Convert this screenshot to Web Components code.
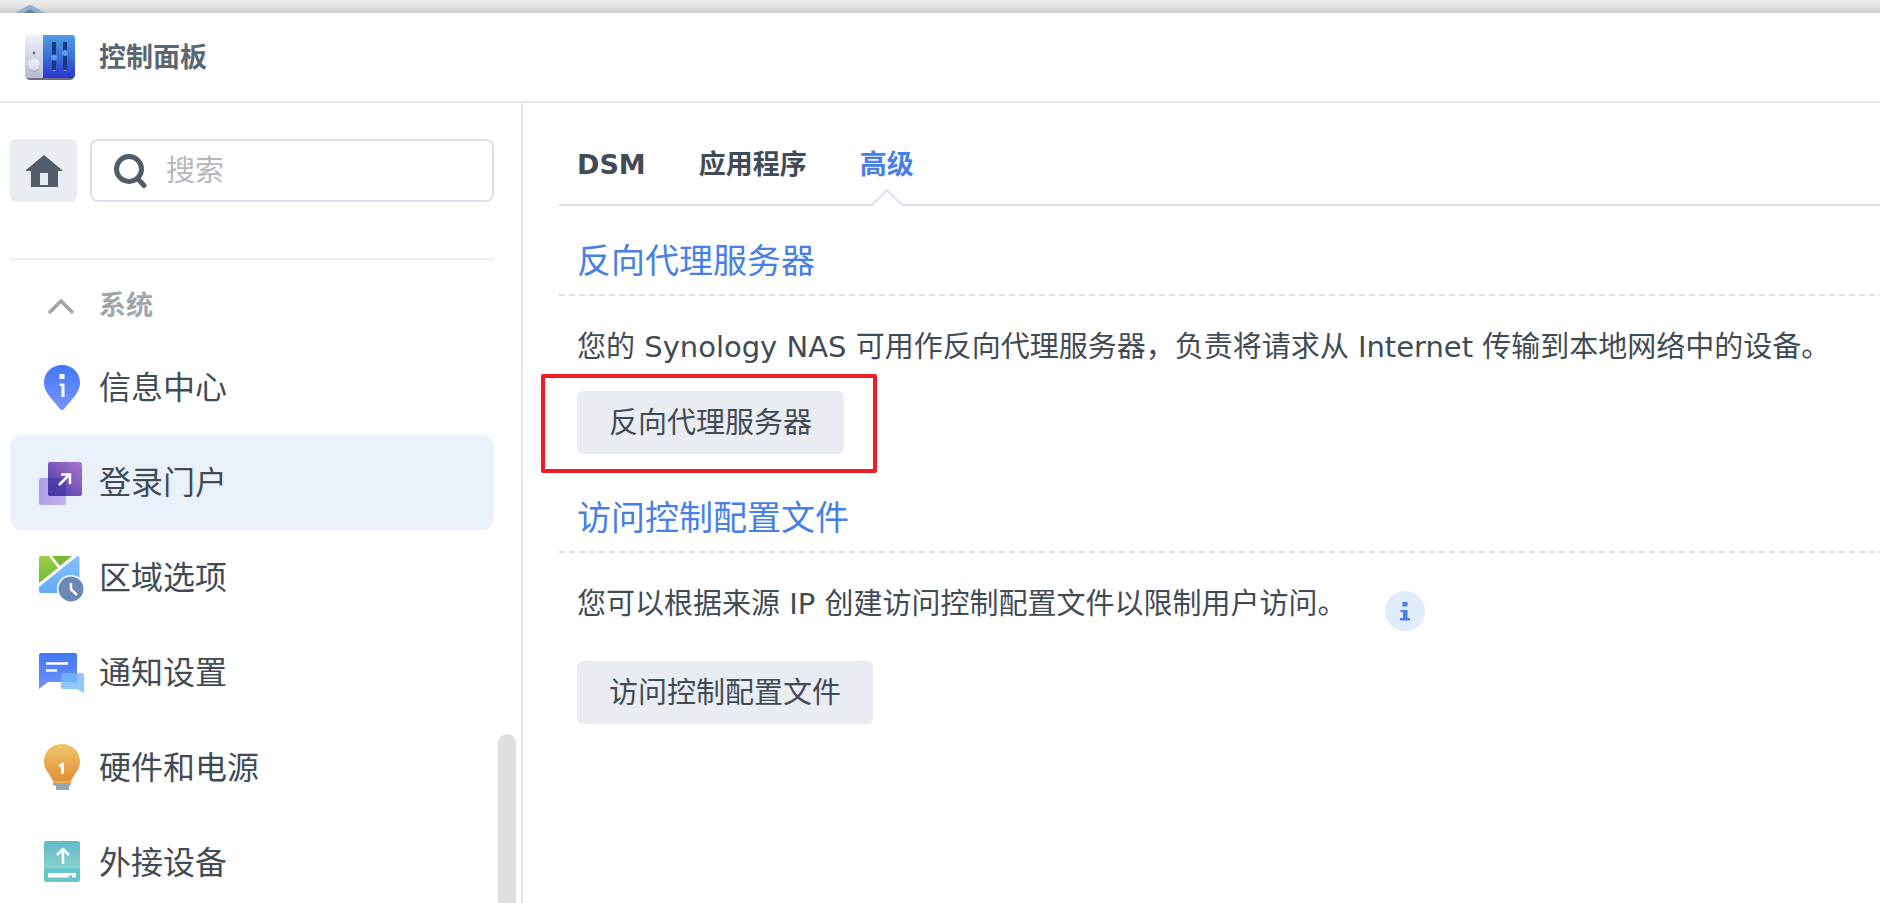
<!DOCTYPE html>
<html lang="zh-CN">
<head>
<meta charset="utf-8">
<title>控制面板</title>
<style>
  body {
    margin: 0;
    height: 100vh;
    overflow: hidden;
    background: #fff;
    color: #414b55;
    font-family: "DejaVu Sans", "Noto Sans CJK SC", sans-serif;
    --line: #dbe1eb;
    --soft: #e9edf2;
    --blue: #4680e6;
  }
</style>
</head>
<body>
<control-panel></control-panel>

<script>
const ICONS = {
  panel: `
    <defs>
      <linearGradient id="l" x2="0" y2="1"><stop stop-color="#eef0fb"/><stop offset="1" stop-color="#b9bbd3"/></linearGradient>
      <linearGradient id="r" x2="0" y2="1"><stop stop-color="#4f9ee6"/><stop offset=".5" stop-color="#3b6fdc"/><stop offset="1" stop-color="#2a38d0"/></linearGradient>
      <linearGradient id="k" x2="0" y2="1"><stop stop-color="#eeeffc"/><stop offset="1" stop-color="#d9dbf0"/></linearGradient>
    </defs>
    <rect x="1" y="3" width="48" height="42" rx="4" fill="#6d6c80"/>
    <path d="M3 0H18V43H3Q0 43 0 40V3Q0 0 3 0Z" fill="url(#l)"/>
    <path d="M18 0H47Q50 0 50 3V40Q50 43 47 43H18Z" fill="url(#r)"/>
    <circle cx="9" cy="18" r="1.4" fill="#6f7080"/>
    <circle cx="9" cy="31" r="6" fill="#a9abc4"/>
    <circle cx="9" cy="29.5" r="6" fill="url(#k)"/>
    <path d="M27 7h4v28h-4zM38 7h4v28h-4z" fill="#1c3884"/>
    <path d="M27.5 35.5h3M38.5 35.5h3" stroke="#6f8fe0"/>
    <circle cx="29" cy="22.5" r="3" fill="#5b9bf5"/>
    <circle cx="40" cy="18" r="3" fill="#5b9bf5"/>`,
  home: `<path d="M18 0 36 15v1H32V32H5V16H0V15ZM14 18V30H22V18Z" fill="#535d67" fill-rule="evenodd"/>`,
  search: `<circle cx="15" cy="15" r="12.5" fill="none" stroke="#535d67" stroke-width="5"/><path d="M24 25 30 31.5" stroke="#535d67" stroke-width="5" stroke-linecap="round"/>`,
  chevron: `<path d="M2 13 13 2 24 13" fill="none" stroke="#a0a5aa" stroke-width="3.5" stroke-linecap="round"/>`,
  info: `
    <linearGradient id="g" x2="0" y2="1"><stop stop-color="#4277f6"/><stop offset="1" stop-color="#7795ff"/></linearGradient>
    <path d="M23 1C12.5 1 5 9 5 18.500 5 25 8 29 11 33L21 45Q23 47.5 25 45L35 33C38 29 41 25 41 18.500 41 9 33.5 1 23 1Z" fill="url(#g)"/>
    <path d="M20.5 10h5v5h-5zM20.5 19.500h5V33h-3V22h-2z" fill="#fff"/>`,
  portal: `
    <defs>
      <linearGradient id="a" x1="0" y1="1" x2="1" y2="0"><stop stop-color="#4a3cae"/><stop offset=".5" stop-color="#7856bd"/><stop offset="1" stop-color="#ac76d0"/></linearGradient>
      <linearGradient id="b"><stop stop-color="#ae9ee9"/><stop offset="1" stop-color="#c3b3f7"/></linearGradient>
    </defs>
    <rect y="19" x="0" width="27" height="27" rx="2" fill="url(#b)"/>
    <rect x="9" y="3" width="34" height="34" rx="2" fill="url(#a)"/>
    <path d="M9 19H27V37H11Q9 37 9 35Z" fill="#3a2e9e" opacity=".45"/>
    <path d="M20 26 30 16M22 15.500H31V25" fill="none" stroke="#fff" stroke-width="2.5"/>`,
  region: `
    <defs>
      <linearGradient id="g1" x2="0" y2="1"><stop stop-color="#9fce42"/><stop offset="1" stop-color="#6db93a"/></linearGradient>
      <linearGradient id="g2" x2="0" y2="1"><stop stop-color="#86c1fb"/><stop offset="1" stop-color="#62abf8"/></linearGradient>
    </defs>
    <path d="M2 2H10L19 14 0 29V4Q0 2 2 2Z" fill="url(#g1)"/>
    <path d="M13 2H33L21 12Z" fill="#78b936"/>
    <path d="M40.5 3V39H2Q0 39 0 37V33L37 3Q40.5 1 40.5 3Z" fill="url(#g2)"/>
    <circle cx="32" cy="35" r="14" fill="#fff"/>
    <circle cx="32" cy="35" r="12.5" fill="#6a88b3"/>
    <path d="M32 29V35.500L38 41" fill="none" stroke="#fff" stroke-width="2.5"/>`,
  notify: `
    <linearGradient id="g" x2="0" y2="1"><stop stop-color="#4277f6"/><stop offset="1" stop-color="#7092ff"/></linearGradient>
    <path d="M2 4H36Q38 4 38 6V33H9L0 40V6Q0 4 2 4Z" fill="url(#g)"/>
    <path d="M7 14.500H29M7 21.500H18" stroke="#fff" stroke-width="2.5"/>
    <path d="M24 24H43Q45 24 45 26V44L38 40H24Q22 40 22 38V26Q22 24 24 24Z" fill="#74b9fb" opacity=".8"/>`,
  bulb: `
    <linearGradient id="g" x2="0" y2="1"><stop stop-color="#efc66c"/><stop offset="1" stop-color="#e48b35"/></linearGradient>
    <path d="M14 38H32V41L30 42V46H17V42L14 41Z" fill="#9ba4ad"/>
    <path d="M23 0C12 0 5 8 5 17.500 5 26 11 30 14 37V39H32V37C35 30 41 26 41 17.500 41 8 34 0 23 0Z" fill="url(#g)"/>
    <path d="M14 37H32V39H14Z" fill="#efb04f"/>
    <path d="M20 21 23 18.500H25V30H22V22.500L20 23Z" fill="#fff"/>`,
  device: `
    <linearGradient id="g" x2="0" y2="1"><stop stop-color="#62bac8"/><stop offset="1" stop-color="#88d1cd"/></linearGradient>
    <path d="M7 2H39Q41 2 41 4V29H5V4Q5 2 7 2Z" fill="url(#g)"/>
    <path d="M5 29H41V41Q41 43 39 43H7Q5 43 5 41Z" fill="#64c8c6"/>
    <path d="M24 25V10M18 16 24 10 30 16" fill="none" stroke="#fff" stroke-width="2.5"/>
    <path d="M9 34H37V38.500H33V36.500H30V38.500H9Z" fill="#fff"/>`
};

// Shared helper: every element opens its own root and fills it from a template
class BaseElement extends HTMLElement {
  render(html) {
    const template = document.createElement('template');
    template.innerHTML = html;
    this.attachShadow({ mode: 'open' }).appendChild(template.content.cloneNode(true));
  }
}

class DsmIcon extends BaseElement {
  connectedCallback() {
    const w = this.getAttribute('w');
    const h = this.getAttribute('h');
    this.render(`
      <style>
        :host { display: inline-flex; flex: none; }
        svg { display: block; overflow: visible; }
      </style>
      <svg width="${w}" height="${h}" viewBox="0 0 ${w} ${h}" aria-hidden="true">${ICONS[this.getAttribute('name')]}</svg>
    `);
  }
}

class DesktopStrip extends BaseElement {
  connectedCallback() {
    this.render(`
      <style>
        :host {
          display: block;
          height: 13px;
          padding-left: 12px;
          overflow: hidden;
          background: linear-gradient(#ededed, #e2e2e2 50%, #cbcbcb);
        }
        svg { display: block; }
      </style>
      <svg width="36" height="13" aria-hidden="true">
        <path d="M3 13 14 6.500Q18 4 22 6.500L33 13Z" fill="#92b1cf"/>
        <path d="M11 13 18 9.500 25 13Z" fill="#737d89"/>
      </svg>
    `);
  }
}

class WindowHeader extends BaseElement {
  connectedCallback() {
    this.render(`
      <style>
        :host {
          display: flex;
          align-items: center;
          gap: 24px;
          height: 86px;
          padding: 2px 0 0 25px;
          border-bottom: 2px solid #e3e8ef;
        }
        h1 {
          margin: 0;
          font-size: 27px;
          line-height: 36px;
          color: #5c666f;
        }
      </style>
      <dsm-icon name="panel" w="50" h="46"></dsm-icon>
      <h1><slot></slot></h1>
    `);
  }
}

class SearchBar extends BaseElement {
  connectedCallback() {
    this.render(`
      <style>
        :host { display: flex; gap: 13px; }
        button {
          display: flex;
          align-items: center;
          justify-content: center;
          width: 67px;
          height: 63px;
          padding: 0;
          border: 0;
          border-radius: 6px;
          background: var(--soft);
        }
        label {
          flex: 1;
          display: flex;
          align-items: center;
          gap: 20px;
          min-width: 0;
          padding-left: 22px;
          border: 2px solid var(--line);
          border-radius: 8px;
        }
        input {
          flex: 1;
          min-width: 0;
          height: 40px;
          padding: 0;
          border: 0;
          outline: 0;
          background: none;
          font: inherit;
          font-size: 29px;
          color: inherit;
        }
        input::placeholder { color: #b4b8bc; }
      </style>
      <button type="button" aria-label="主页"><dsm-icon name="home" w="36" h="32"></dsm-icon></button>
      <label>
        <dsm-icon name="search" w="32" h="34"></dsm-icon>
        <input type="search" placeholder="搜索" aria-label="搜索">
      </label>
    `);
  }
}

class NavGroup extends BaseElement {
  connectedCallback() {
    this.render(`
      <style>
        :host {
          display: block;
          margin-top: 56px;
          border-top: 2px solid var(--soft);
        }
        button {
          display: flex;
          align-items: center;
          gap: 25px;
          width: 100%;
          height: 80px;
          padding: 12px 0 0 38px;
          border: 0;
          background: none;
          font: inherit;
          font-size: 27px;
          font-weight: bold;
          line-height: 36px;
          color: #a0a5aa;
        }
        nav { display: flex; flex-direction: column; }
      </style>
      <button type="button" aria-expanded="true">
        <dsm-icon name="chevron" w="26" h="15"></dsm-icon>${this.getAttribute('label')}
      </button>
      <nav><slot></slot></nav>
    `);
  }
}

class NavItem extends BaseElement {
  connectedCallback() {
    this.render(`
      <style>
        :host { display: block; }
        a {
          display: flex;
          align-items: center;
          gap: 14px;
          height: 95px;
          padding-left: 29px;
          border-radius: 12px;
          color: inherit;
          font-size: 32px;
          line-height: 44px;
          text-decoration: none;
        }
        :host([selected]) a { background: #eaf1fb; }
      </style>
      <a href="#"><dsm-icon name="${this.getAttribute('icon')}" w="46" h="48"></dsm-icon><span><slot></slot></span></a>
    `);
  }
}

class SideBar extends BaseElement {
  connectedCallback() {
    this.render(`
      <style>
        :host {
          position: relative;
          box-sizing: border-box;
          flex: none;
          width: 523px;
          padding: 36px 27px 0 10px;
          border-right: 2px solid #e3e8ef;
          overflow: hidden;
        }
        .thumb {
          position: absolute;
          right: 5px;
          top: 631px;
          bottom: -20px;
          width: 18px;
          border-radius: 9px;
          background: #e0e0e0;
        }
      </style>
      <search-bar></search-bar>
      <slot></slot>
      <div class="thumb"></div>
    `);
  }
}

class TabBar extends BaseElement {
  connectedCallback() {
    this.render(`
      <style>
        :host {
          display: flex;
          gap: 53px;
          padding-left: 18px;
          border-bottom: 2px solid var(--line);
        }
      </style>
      <slot></slot>
    `);
  }
}

class TabLink extends BaseElement {
  connectedCallback() {
    this.render(`
      <style>
        :host { position: relative; display: block; }
        a {
          display: block;
          padding: 44px 0 21px;
          color: inherit;
          font-size: 27px;
          font-weight: bold;
          line-height: 36px;
          text-decoration: none;
        }
        svg { display: none; }
        :host([active]) a { color: var(--blue); }
        /* notch sits over the bar's bottom border */
        :host([active]) svg {
          display: block;
          position: absolute;
          left: calc(50% - 15px);
          bottom: -2px;
        }
      </style>
      <a href="#"><slot></slot></a>
      <svg width="30" height="17" aria-hidden="true">
        <path d="M0 17 15 1 30 17Z" fill="#fff"/>
        <path d="M0 16 15 1 30 16" fill="none" stroke="#dbe1eb" stroke-width="2"/>
      </svg>
    `);
  }
}

class SettingSection extends BaseElement {
  connectedCallback() {
    this.render(`
      <style>
        :host { display: block; }
        h2 {
          margin: 0;
          padding: 0 18px 10px;
          font-size: 34px;
          font-weight: normal;
          line-height: 46px;
          color: var(--blue);
        }
        .rule {
          height: 2px;
          background: repeating-linear-gradient(90deg, var(--line) 0 6px, transparent 6px 10px);
        }
        .body { padding: 31px 18px 0; }
      </style>
      <h2>${this.getAttribute('heading')}</h2>
      <div class="rule"></div>
      <div class="body"><slot></slot></div>
    `);
  }
}

class SettingText extends BaseElement {
  connectedCallback() {
    this.render(`
      <style>
        :host {
          display: flex;
          align-items: flex-start;
          gap: 39px;
          margin-bottom: 24px;
        }
        p {
          margin: 0;
          font-size: 29px;
          line-height: 40px;
          white-space: nowrap;
        }
        slot[name=tip] { display: block; }
      </style>
      <p><slot></slot></p>
      <slot name="tip"></slot>
    `);
  }
}

class InfoTip extends BaseElement {
  connectedCallback() {
    this.render(`
      <style>
        :host { display: block; padding: 7px 0 6px; }
        button {
          display: block;
          width: 40px;
          height: 40px;
          padding: 0;
          border: 0;
          border-radius: 50%;
          background: #e2ebfa;
        }
        svg { display: block; }
      </style>
      <button type="button" aria-label="信息">
        <svg width="40" height="40" aria-hidden="true">
          <path d="M17.5 11h5v4.500h-5zM15.5 19h7v8h2.500v2.500H15v-2.500h3v-6h-2.500z" fill="#4680e6"/>
        </svg>
      </button>
    `);
  }
}

class DsmButton extends BaseElement {
  connectedCallback() {
    this.render(`
      <style>
        :host { position: relative; display: inline-block; vertical-align: top; }
        button {
          display: block;
          height: 63px;
          padding: 0 32px;
          border: 0;
          border-radius: 6px;
          background: var(--soft);
          font: inherit;
          font-size: 29px;
          line-height: 40px;
          color: inherit;
        }
        :host([marked])::after {
          content: "";
          position: absolute;
          inset: -17px -33px -19px -36px;
          border: 4px solid #ee1c24;
          border-radius: 2px;
          pointer-events: none;
        }
      </style>
      <button type="button"><slot></slot></button>
    `);
  }
}

class ControlPanel extends BaseElement {
  connectedCallback() {
    this.render(`
      <style>
        :host { display: flex; flex-direction: column; height: 100%; }
        .columns { flex: 1; display: flex; min-height: 0; }
        main {
          flex: 1;
          min-width: 0;
          padding-left: 36px;
          overflow: hidden;
        }
        .sections {
          display: flex;
          flex-direction: column;
          gap: 41px;
          padding-top: 32px;
        }
      </style>
      <desktop-strip></desktop-strip>
      <window-header>控制面板</window-header>
      <div class="columns">
        <side-bar>
          <nav-group label="系统">
            <nav-item icon="info">信息中心</nav-item>
            <nav-item icon="portal" selected>登录门户</nav-item>
            <nav-item icon="region">区域选项</nav-item>
            <nav-item icon="notify">通知设置</nav-item>
            <nav-item icon="bulb">硬件和电源</nav-item>
            <nav-item icon="device">外接设备</nav-item>
          </nav-group>
        </side-bar>
        <main>
          <tab-bar>
            <tab-link>DSM</tab-link>
            <tab-link>应用程序</tab-link>
            <tab-link active>高级</tab-link>
          </tab-bar>
          <div class="sections">
            <setting-section heading="反向代理服务器">
              <setting-text>您的 Synology NAS 可用作反向代理服务器，负责将请求从 Internet 传输到本地网络中的设备。</setting-text>
              <dsm-button marked>反向代理服务器</dsm-button>
            </setting-section>
            <setting-section heading="访问控制配置文件">
              <setting-text>您可以根据来源 IP 创建访问控制配置文件以限制用户访问。<info-tip slot="tip"></info-tip></setting-text>
              <dsm-button>访问控制配置文件</dsm-button>
            </setting-section>
          </div>
        </main>
      </div>
    `);
  }
}

customElements.define('dsm-icon', DsmIcon);
customElements.define('desktop-strip', DesktopStrip);
customElements.define('window-header', WindowHeader);
customElements.define('search-bar', SearchBar);
customElements.define('nav-group', NavGroup);
customElements.define('nav-item', NavItem);
customElements.define('side-bar', SideBar);
customElements.define('tab-bar', TabBar);
customElements.define('tab-link', TabLink);
customElements.define('setting-section', SettingSection);
customElements.define('setting-text', SettingText);
customElements.define('info-tip', InfoTip);
customElements.define('dsm-button', DsmButton);
customElements.define('control-panel', ControlPanel);
</script>
</body>
</html>
